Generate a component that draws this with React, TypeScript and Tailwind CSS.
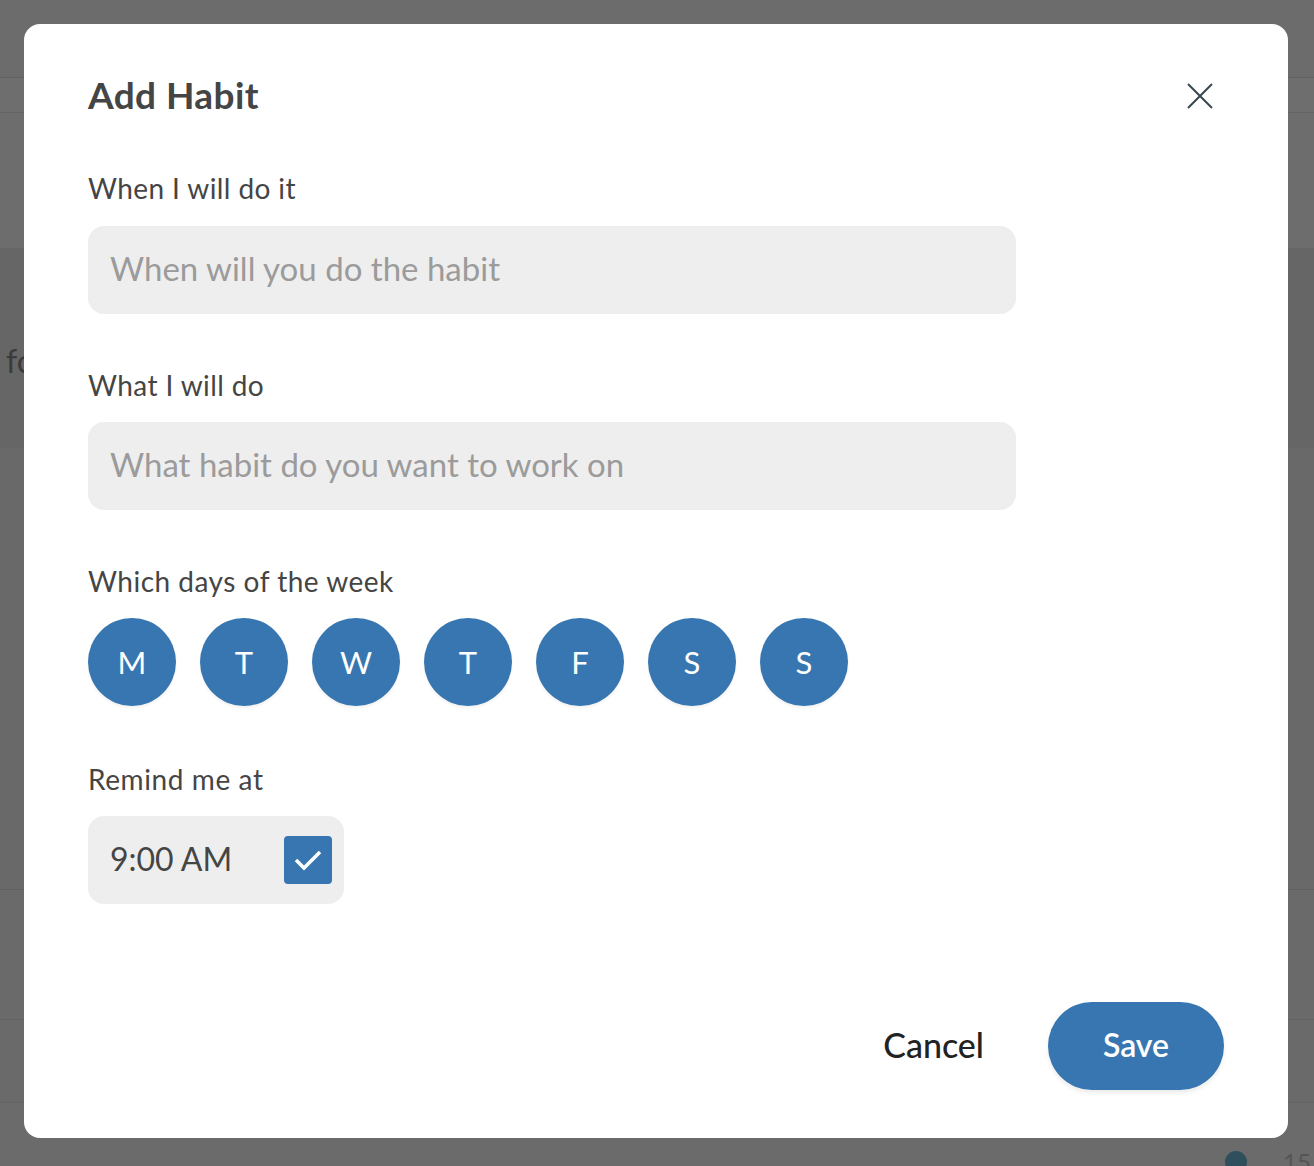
import React from "react";

const days = ["M", "T", "W", "T", "F", "S", "S"];

export default function App() {
  return (
    <div
      className="relative w-[1314px] h-[1166px] overflow-hidden bg-[#6c6c6c]"
      style={{ fontFamily: "Lato, 'Open Sans', sans-serif" }}
    >
      {/* background app (dimmed) */}
      <div className="flex flex-col">
        <div className="h-[78px] border-b border-[#626262]" />
        <div className="h-[35px] bg-[#6e6e6e] border-b border-[#646464]" />
        <div className="h-[135px] bg-[#6d6d6d]" />
        <div className="h-[200px] bg-[#666666] flex items-center">
          <span className="ml-[6px] mt-[26px] text-[32px] text-[#3b3b3b]">fc</span>
        </div>
        <div className="h-[442px] bg-[#696969] border-b border-[#5f5f5f]" />
        <div className="h-[130px] bg-[#6a6a6a] border-b border-[#616161]" />
        <div className="h-[83px] bg-[#6a6a6a] border-b border-[#636363]" />
        <div className="h-[63px] bg-[#6b6b6b] flex justify-end items-end">
          <div className="flex items-center gap-[36px] w-[98px] mr-[-9px] mb-[-14px]">
            <div className="w-[22px] h-[22px] shrink-0 rounded-full bg-[#2f4f5c]" />
            <span className="text-[24px] text-[#555]">15</span>
          </div>
        </div>
      </div>

      {/* modal */}
      <div className="absolute left-[24px] top-[24px] w-[1264px] h-[1114px] bg-white rounded-[16px] pt-[51px] px-[64px] pb-[48px] flex flex-col text-[#454545]">
        <div className="flex items-center justify-between h-[40px]">
          <h1 className="text-[37px] font-bold leading-[40px] tracking-[0.4px]">Add Habit</h1>
          <button className="w-[40px] h-[40px] flex items-center justify-center mr-[4px] mt-[2px]">
            <svg width="26" height="26" viewBox="0 0 26 26" fill="none">
              <path d="M1 1L25 25M25 1L1 25" stroke="#37474f" strokeWidth="2" />
            </svg>
          </button>
        </div>

        <label className="mt-[57px] text-[28px] leading-[32px] tracking-[0.4px]">When I will do it</label>
        <div className="mt-[22px] w-[928px] h-[88px] rounded-[16px] bg-[#eeeeee] flex items-center pl-[22px] pb-[2px]">
          <span className="text-[33px] text-[#9b9b9b]">When will you do the habit</span>
        </div>

        <label className="mt-[55px] text-[28px] leading-[32px] tracking-[0.4px]">What I will do</label>
        <div className="mt-[21px] w-[928px] h-[88px] rounded-[16px] bg-[#eeeeee] flex items-center pl-[22px] pb-[2px]">
          <span className="text-[33px] text-[#9b9b9b]">What habit do you want to work on</span>
        </div>

        <label className="mt-[55px] text-[28px] leading-[32px] tracking-[0.5px]">Which days of the week</label>
        <div className="mt-[21px] flex gap-[24px]">
          {days.map((d, i) => (
            <div
              key={i}
              className="w-[88px] h-[88px] rounded-full bg-[#3776b0] shadow-[0_2px_3px_rgba(0,0,0,0.06)] flex items-center justify-center text-white text-[31px]"
            >
              {d}
            </div>
          ))}
        </div>

        <label className="mt-[57px] text-[28px] leading-[32px] tracking-[0.6px]">Remind me at</label>
        <div className="mt-[21px] w-[256px] h-[88px] rounded-[16px] bg-[#eeeeee] flex items-center pl-[22px] pr-[12px] justify-between">
          <span className="text-[32px] text-[#454545] pb-[2px]">9:00 AM</span>
          <div className="w-[48px] h-[48px] rounded-[4px] bg-[#3776b0] flex items-center justify-center">
            <svg width="30" height="22" viewBox="0 0 30 22" fill="none">
              <path d="M3 11L11 19L27 3" stroke="white" strokeWidth="3.5" />
            </svg>
          </div>
        </div>

        <div className="mt-auto flex items-center justify-end gap-[64px]">
          <button className="text-[34px] text-[#222222] font-medium pb-[3px]">Cancel</button>
          <button className="w-[176px] h-[88px] rounded-full bg-[#3776b0] text-white text-[32px] font-semibold shadow-[0_3px_4px_rgba(0,0,0,0.08)] pb-[2px]">
            Save
          </button>
        </div>
      </div>
    </div>
  );
}
